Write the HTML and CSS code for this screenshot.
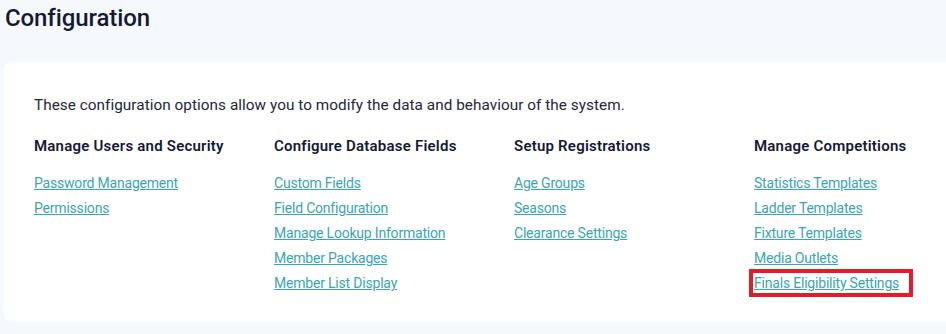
FILE: index.html
```html
<!DOCTYPE html>
<html>
<head>
<meta charset="utf-8">
<link rel="stylesheet" href="styles.css">
</head>
<body>
<div class="page">
  <h1 class="title">Configuration</h1>
  <div class="card">
    <p class="intro">These configuration options allow you to modify the data and behaviour of the system.</p>
    <div class="cols">
      <div class="col">
        <h2 class="col-title">Manage Users and Security</h2>
        <ul class="links">
          <li><a href="#">Password Management</a></li>
          <li><a href="#">Permissions</a></li>
        </ul>
      </div>
      <div class="col">
        <h2 class="col-title">Configure Database Fields</h2>
        <ul class="links">
          <li><a href="#">Custom Fields</a></li>
          <li><a href="#">Field Configuration</a></li>
          <li><a href="#">Manage Lookup Information</a></li>
          <li><a href="#">Member Packages</a></li>
          <li><a href="#">Member List Display</a></li>
        </ul>
      </div>
      <div class="col">
        <h2 class="col-title">Setup Registrations</h2>
        <ul class="links">
          <li><a href="#">Age Groups</a></li>
          <li><a href="#">Seasons</a></li>
          <li><a href="#">Clearance Settings</a></li>
        </ul>
      </div>
      <div class="col">
        <h2 class="col-title">Manage Competitions</h2>
        <ul class="links">
          <li><a href="#">Statistics Templates</a></li>
          <li><a href="#">Ladder Templates</a></li>
          <li><a href="#">Fixture Templates</a></li>
          <li><a href="#">Media Outlets</a></li>
          <li><a href="#" class="highlight">Finals Eligibility Settings</a></li>
        </ul>
      </div>
    </div>
  </div>
</div>
</body>
</html>
```
FILE: styles.css
```css
html, body {
  margin: 0;
  padding: 0;
  background: #f5f8fc;
}
body {
  font-family: Roboto, "Liberation Sans", sans-serif;
  color: #1b1f3b;
  overflow: hidden;
}
.page {
  padding: 0 0 0 4px;
  width: 960px;
}
.title {
  margin: 0;
  padding: 4px 0 0 1px;
  height: 62px;
  box-sizing: border-box;
  font-size: 24px;
  font-weight: 500;
  line-height: 28px;
  color: #141a33;
  letter-spacing: -0.1px;
}
.card {
  background: #fff;
  border-radius: 8px;
  height: 260px;
  box-sizing: border-box;
  padding: 33px 30px 0;
}
.intro {
  margin: 0;
  font-size: 15.3px;
  line-height: 20px;
  color: #232738;
  letter-spacing: 0.05px;
}
.cols {
  display: grid;
  grid-template-columns: repeat(4, 240px);
  margin-top: 21px;
}
.col-title {
  margin: 0;
  font-size: 15px;
  font-weight: 600;
  line-height: 20px;
  color: #141a33;
  letter-spacing: 0.22px;
}
.links {
  list-style: none;
  margin: 17px 0 0;
  padding: 0;
}
.links li {
  height: 25px;
  line-height: 20px;
}
.links a {
  font-size: 14px;
  color: #3aa6b3;
  text-decoration: underline;
  letter-spacing: -0.2px;
}
.links a.highlight {
  padding: 1px 9px 1px 0;
  outline: 4px solid #e51c26;
  outline-offset: 1px;
}
```
